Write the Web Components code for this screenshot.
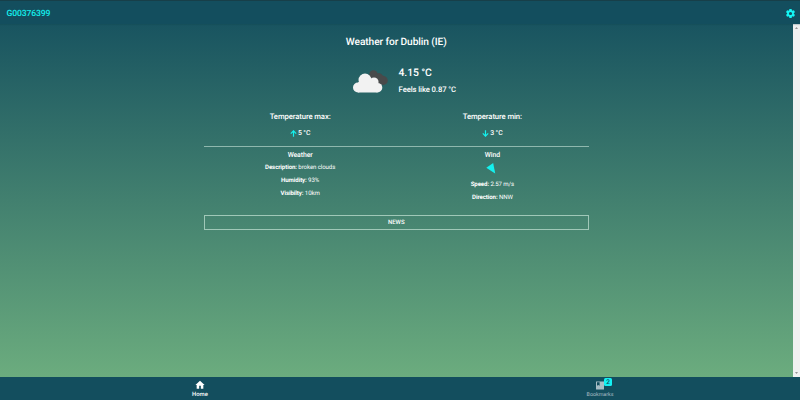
<!DOCTYPE html>
<html lang="en"><head><meta charset="utf-8"><title>Weather</title>
<style>html,body{margin:0;height:100%;overflow:hidden}body{font-family:Roboto,"Liberation Sans",sans-serif;color:#fff;text-rendering:geometricPrecision}</style></head>
<body>
<weather-app></weather-app>
<script>
const define = (name, html) => {
  const t = document.createElement('template');
  t.innerHTML = html;
  customElements.define(name, class extends HTMLElement {
    constructor() { super(); this.attachShadow({mode: 'open'}).append(t.content.cloneNode(true)); }
  });
};

define('text-line', `<style>
:host{display:flex;justify-content:center;align-items:center;white-space:nowrap;height:var(--h,13px);font-size:var(--s,6.100px);letter-spacing:var(--ls,-.1px);font-weight:var(--w,400);line-height:1}
span{white-space:pre}
</style><slot name="icon"></slot><span><slot></slot></span>`);

define('app-header', `<style>
:host{display:flex;box-sizing:border-box;height:24px;flex:none;align-items:center;justify-content:space-between;padding:2px 4.500px 0 6.500px;background:#134e5e;border-top:1px solid #173f49;box-shadow:0 1px 1px #0b3b4733;z-index:1}
span{font-size:8.600px;letter-spacing:-.13px;font-weight:500;color:#14f1ee;line-height:1;padding-top:1px}
svg{width:11px;height:11px;fill:#14f6f4}
</style><span><slot></slot></span>
<svg viewBox="0 0 24 24"><path d="M19.400 13a7.500 7.500 0 0 0 0-2l2.200-1.700a.5.5 0 0 0 .1-.6l-2-3.500a.5.5 0 0 0-.6-.2l-2.500 1a7.500 7.500 0 0 0-1.700-1L14.500 2.400A.5.5 0 0 0 14 2h-4a.5.5 0 0 0-.5.4L9.100 5a7.500 7.500 0 0 0-1.700 1L4.900 5a.5.5 0 0 0-.6.2l-2 3.500a.5.5 0 0 0 .1.600L4.600 11a7.500 7.500 0 0 0 0 2l-2.200 1.700a.5.5 0 0 0-.1.600l2 3.500c.1.200.4.300.6.200l2.500-1c.5.400 1.100.7 1.700 1l.4 2.600c0 .200.2.400.5.400h4c.3 0 .5-.2.500-.4l.4-2.600c.6-.3 1.200-.6 1.700-1l2.500 1c.2.100.5 0 .6-.2l2-3.500a.5.5 0 0 0-.1-.6zM12 15.500a3.500 3.500 0 1 1 0-7 3.500 3.500 0 0 1 0 7z"/></svg>`);

define('current-weather', `<style>
:host{display:flex;height:46px;padding-left:147.600px;box-sizing:border-box}
svg{width:37px;height:27px;margin:9.500px 10px 0 0}
text-line{justify-content:flex-start}
.t{--s:10.400px;--ls:-.13px;--w:500;--h:18px;margin-top:6px}.f{--s:7.700px;--w:500;--h:16px}
</style>
<svg viewBox="0 0 37 27"><g fill="#484a4b"><circle cx="21.500" cy="6.500" r="4.300"/><circle cx="27" cy="8.500" r="3.200"/><circle cx="31.500" cy="12.500" r="4.300"/><path d="M19 9l8-3.700 7 4-2 7.500-7-1z"/></g><g fill="#f2f2f2"><circle cx="13" cy="12" r="6.500"/><circle cx="22" cy="14" r="4.600"/><circle cx="6" cy="19.500" r="5"/><circle cx="25.500" cy="19.700" r="4.800"/><path d="M6 14.500l7-4 9 2 3.500 12H6z"/></g></svg>
<div><text-line class="t"><slot name="temp"></slot></text-line><text-line class="f"><slot name="feels"></slot></text-line></div>`);

define('temp-extreme', `<style>
:host{display:block;flex:1}
.l{--s:7.700px;--w:500;--h:16px}.v{--s:6.900px;--w:500;--h:16px}
svg{width:7px;height:7px;margin-right:1px;fill:none;stroke:#14f1ee;stroke-width:1.200}
:host([down]) svg{transform:rotate(180deg)}
</style><text-line class="l"><slot name="label"></slot></text-line>
<text-line class="v"><svg slot="icon" viewBox="0 0 7 7"><path d="M3.500 6.700V.8M.8 3.600L3.500.8l2.700 2.800"/></svg><slot></slot></text-line>`);

define('detail-column', `<style>
:host{display:block;flex:1;padding-top:2px}
.h{--s:6.900px;--w:500;--h:13px}
::slotted(svg){display:block;margin:0 auto;width:12px;height:17px}
</style><text-line class="h"><slot name="heading"></slot></text-line><slot></slot>`);

define('news-button', `<style>
:host{display:block}
button{all:unset;box-sizing:border-box;display:flex;width:100%;height:15px;padding-top:1px;align-items:center;justify-content:center;border:1px solid #a0c8b8;font-size:6px;font-weight:500;line-height:1}
</style><button><slot></slot></button>`);

define('tab-item', `<style>
:host{flex:1;display:flex;flex-direction:column;align-items:center;color:#a8bdc5;font-size:5.300px;line-height:7px;padding-top:3px}
:host([active]){color:#fff;font-size:5.900px;font-weight:500}
.i{position:relative;height:12px}
svg{display:block;width:10px;height:10px;fill:currentColor}
::slotted([slot=badge]){position:absolute;left:9px;top:-2px;width:8px;height:8px;border-radius:1.500px;background:#14f1f4;color:#134e5e;text-align:center;font-size:6.500px;line-height:9px;font-weight:500}
.b{display:none}:host([bookmark]) .b{display:block}:host([bookmark]) .a{display:none}
</style><div class="i"><svg class="a" viewBox="0 0 24 24"><path d="M10 21v-7h4v7h6v-9h3L12 2 1 12h3v9z"/></svg><svg class="b" viewBox="0 0 10 10"><path fill-rule="evenodd" d="M1 1.500h8v8H1zM2 2.300v3.500l1.300-.9 1.300.9V2.300z"/></svg><slot name="badge"></slot></div><slot></slot>`);

define('scroll-bar', `<style>
:host{display:flex;flex-direction:column;justify-content:space-between;align-items:center;width:7px;flex:none;box-sizing:border-box;padding:3px 0;background:#f1f1f1}
svg{width:3px;height:2px;fill:#777}
</style><svg viewBox="0 0 4 2"><path d="M0 2L2 0l2 2z"/></svg><svg viewBox="0 0 4 2"><path d="M0 0l2 2 2-2z"/></svg>`);

define('weather-app', `<style>
:host{display:flex;flex-direction:column;width:800px;height:400px;background:linear-gradient(#134e5e,#71b280)}
.body{flex:1;display:flex;min-height:0}
main{flex:1;padding:10px 204.500px 0 204px;box-sizing:border-box}
.title{--s:10.200px;--w:500;--h:18px}
.row{display:flex}
hr{border:0;border-top:1px solid #8fb8ae;margin:5px 0 0}
news-button{margin-top:10px}
nav{display:flex;height:23px;flex:none;background:#134e5e}
b{font-weight:700}
</style>
<app-header>G00376399</app-header>
<div class="body"><main>
<text-line class="title">Weather for Dublin (IE)</text-line>
<current-weather style="margin-top:6px"><span slot="temp">4.15 °C</span><span slot="feels">Feels like 0.87 °C</span></current-weather>
<div class="row" style="margin-top:5px"><temp-extreme><span slot="label">Temperature max:</span>5 °C</temp-extreme><temp-extreme down><span slot="label">Temperature min:</span>3 °C</temp-extreme></div>
<hr>
<div class="row"><detail-column><span slot="heading">Weather</span><text-line><b>Description:</b> broken clouds</text-line><text-line><b>Humidity:</b> 93%</text-line><text-line><b>Visibilty:</b> 10km</text-line></detail-column>
<detail-column><span slot="heading">Wind</span><svg viewBox="0 0 12 17"><path fill="#14f1ee" d="M.3 5.800L7.200 1 9.200 11.500 4.500 8.500z"/></svg><text-line><b>Speed:</b> 2.57 m/s</text-line><text-line><b>Direction:</b> NNW</text-line></detail-column></div>
<news-button>NEWS</news-button>
</main><scroll-bar></scroll-bar></div>
<nav><tab-item active>Home</tab-item><tab-item bookmark>Bookmarks<span slot="badge">2</span></tab-item></nav>`);
</script>
</body></html>
